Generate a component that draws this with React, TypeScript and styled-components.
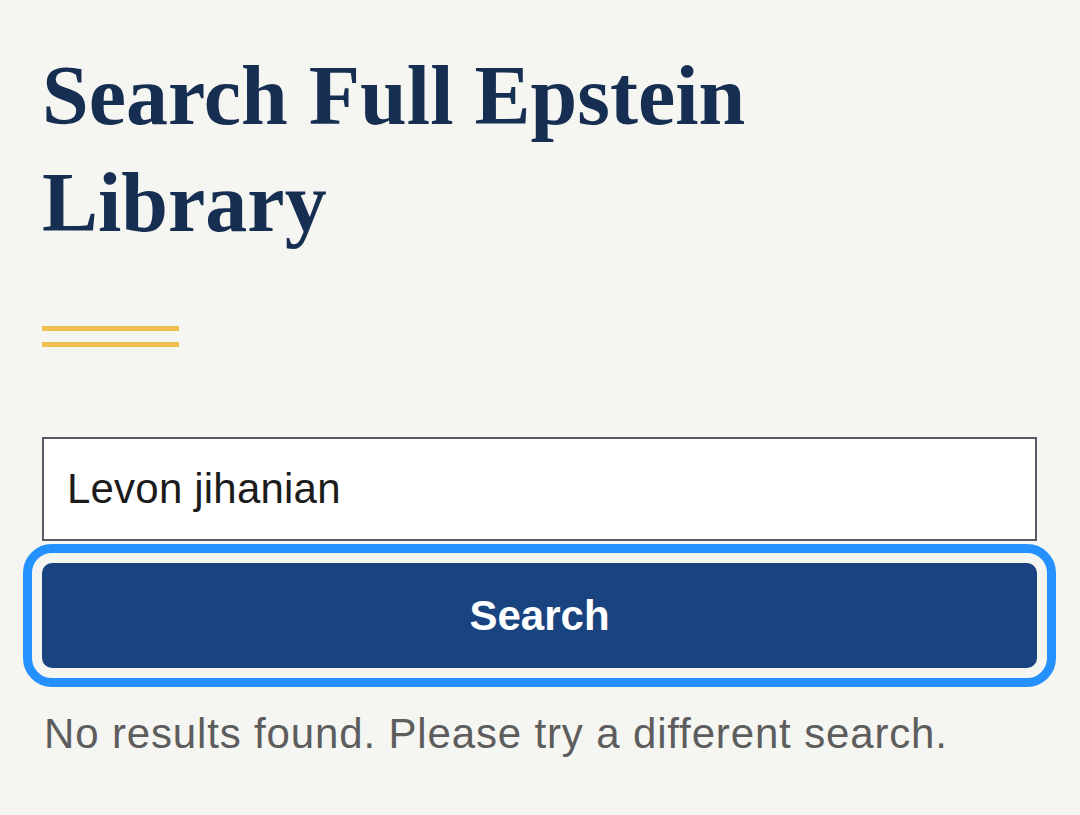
import styled, { createGlobalStyle } from 'styled-components';

const Global = createGlobalStyle`
  html, body {
    margin: 0;
    padding: 0;
    background: #f5f5f1;
  }
  * { box-sizing: border-box; }
`;

const App = () => {
  return (
    <>
      <Global />
      <Page>
        <Title>Search Full Epstein Library</Title>
        <Rule />
        <Form onSubmit={(e) => e.preventDefault()}>
          <Input type="text" defaultValue="Levon jihanian" />
          <Button type="submit">Search</Button>
        </Form>
        <Empty>No results found. Please try a different search.</Empty>
      </Page>
    </>
  );
};

export default App;

const Page = styled.main`
  width: 1080px;
  min-height: 815px;
  padding: 42px 43px 0 42px;
  background: #f5f5f1;
`;

const Title = styled.h1`
  margin: 0;
  font-family: 'Liberation Serif', 'DejaVu Serif', serif;
  font-weight: 700;
  font-size: 84px;
  line-height: 107px;
  color: #162e51;
  max-width: 760px;
`;

const Rule = styled.div`
  width: 137px;
  height: 21px;
  margin-top: 70px;
  border-top: 5px solid #efc04f;
  border-bottom: 5px solid #efc04f;
`;

const Form = styled.form`
  display: flex;
  flex-direction: column;
  gap: 22px;
  margin-top: 90px;
`;

const Input = styled.input`
  width: 100%;
  height: 104px;
  padding: 0 23px;
  border: 2px solid #565c65;
  border-radius: 0;
  background: #fff;
  font-family: 'Liberation Sans', Arial, sans-serif;
  font-size: 42px;
  letter-spacing: 0.2px;
  color: #1b1b1b;
  outline: none;
`;

const Button = styled.button`
  width: 100%;
  height: 105px;
  border: none;
  border-radius: 10px;
  background: #1a4480;
  color: #fff;
  font-family: 'Liberation Sans', Arial, sans-serif;
  font-weight: 700;
  font-size: 42px;
  outline: 9px solid #2491ff;
  outline-offset: 10px;
  cursor: pointer;
`;

const Empty = styled.p`
  margin: 42px 0 0 2px;
  font-family: 'Liberation Sans', Arial, sans-serif;
  font-size: 42px;
  letter-spacing: 0.85px;
  color: #5d5d5d;
`;
